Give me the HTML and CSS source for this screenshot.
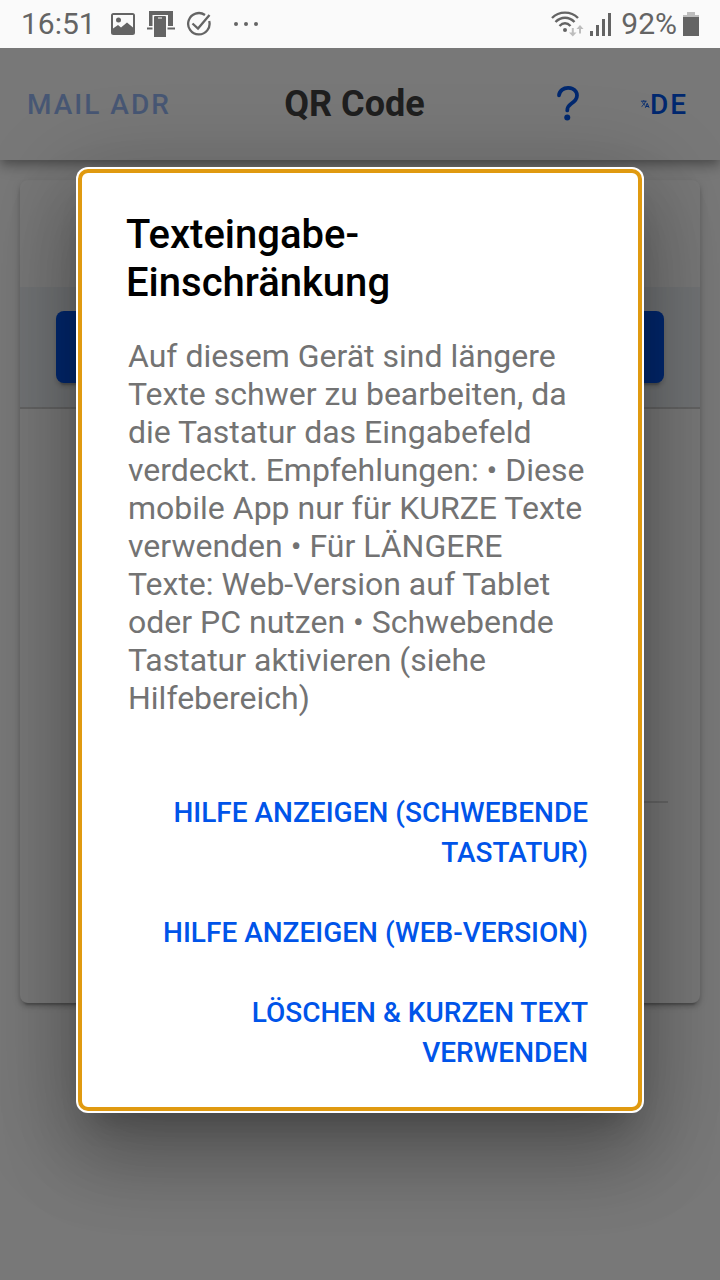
FILE: index.html
```html
<!DOCTYPE html>
<html lang="de">
<head>
<meta charset="utf-8">
<meta name="viewport" content="width=device-width, initial-scale=1">
<title>QR Code</title>
<link rel="stylesheet" href="styles.css">
</head>
<body>
<div class="statusbar">
  <span class="clock">16:51</span>
  <svg class="icon-image" width="24" height="24" viewBox="0 0 24 24" aria-hidden="true">
    <path fill-rule="evenodd" d="M2.500 1h19A2.500 2.500 0 0 1 24 3.500v17a2.500 2.500 0 0 1-2.500 2.500h-19A2.500 2.500 0 0 1 0 20.500v-17A2.500 2.500 0 0 1 2.500 1zM2 3v13.500l5-3.500 3 2.500 6-5 6 5V3z"/>
    <circle cx="7.500" cy="8" r="2.500"/>
  </svg>
  <svg class="icon-device" width="28" height="26" viewBox="0 0 28 26" aria-hidden="true">
    <path d="M2 0h24v15h-5V4H5.500v11H2zM0 16.500h5.500v2H0zM20.500 16.500H28v2h-7.500z"/>
    <path fill-rule="evenodd" d="M8 5h10a1 1 0 0 1 1 1v20H7V6a1 1 0 0 1 1-1zM11 6.500v1h4v-1z"/>
  </svg>
  <svg class="icon-check" width="26" height="26" viewBox="0 0 26 26" aria-hidden="true">
    <path d="M19 4A10.700 10.700 0 1 0 23.200 10M6.500 12.500l5.500 5L23.500 4" fill="none" stroke="currentColor" stroke-width="2.300"/>
  </svg>
  <svg class="icon-more" width="26" height="6" viewBox="0 0 26 6" aria-hidden="true">
    <circle cx="3" cy="3" r="2"/><circle cx="13" cy="3" r="2"/><circle cx="23" cy="3" r="2"/>
  </svg>
  <span class="spacer"></span>
  <svg class="icon-wifi" width="33" height="26" viewBox="0 0 33 26" aria-hidden="true">
    <g fill="none" stroke="currentColor" stroke-width="2.400">
      <path d="M1 7C8-.2 20-.2 27 7M4.500 11C10 5.300 18 5.300 23.500 11M8.500 15C12 11.300 16 11.300 19.500 15"/>
    </g>
    <circle cx="14" cy="19" r="2"/>
    <path class="faint" d="M20.800 17h2v4.500h2.700L21.800 25.500 18 21.500h2.800zM29 14l3.500 4h-2.500v4.500h-2V18h-2.500z"/>
  </svg>
  <svg class="icon-signal" width="24" height="24" viewBox="0 0 24 24" aria-hidden="true">
    <path d="M1 19h3v5H1zM7 13h3v11H7zM13 7h3v17h-3zM19 1h3v23h-3z"/>
  </svg>
  <span class="battery">92%</span>
  <svg class="icon-battery" width="16" height="24" viewBox="0 0 16 24" aria-hidden="true">
    <path class="faint" d="M4 0h8v3h4v3H0V3h4z"/>
    <path d="M0 5h16v19H0z"/>
  </svg>
</div>

<header class="toolbar">
  <button class="toolbar-button" type="button" disabled>MAIL ADR</button>
  <h1 class="toolbar-title">QR Code</h1>
  <div class="toolbar-end">
    <button class="icon-button" type="button" aria-label="Hilfe">
      <svg width="48" height="48" viewBox="0 0 512 512" aria-hidden="true">
        <path d="M160 164s1.440-33 33.540-59.460C212.600 88.830 235.490 84.280 256 84c18.730-.23 35.470 2.940 45.480 7.820C318.590 100.200 352 120.600 352 164c0 45.670-29.180 66.370-62.350 89.180S248 298.360 248 324" fill="none" stroke="currentColor" stroke-linecap="round" stroke-width="40"/>
        <circle cx="248" cy="400" r="32" fill="currentColor"/>
      </svg>
    </button>
    <button class="toolbar-button language" type="button">
      <svg width="10" height="10" viewBox="0 0 512 512" aria-hidden="true">
        <path d="M48 112h288M192 64v48M272 448l96-224 96 224M301.500 384h133M281 112S257 206 199 277 80 384 80 384M256 336s-35-27-75-81-53-95-53-95" fill="none" stroke="currentColor" stroke-width="48"/>
      </svg>DE
    </button>
  </div>
</header>

<main class="content">
  <section class="card">
    <div class="card-head"></div>
    <div class="card-actions"><button class="primary" type="button" aria-label="QR Code"></button></div>
    <div class="card-body"><div class="field"></div></div>
  </section>
</main>

<div class="backdrop">
  <div class="alert" role="alertdialog" aria-modal="true" aria-labelledby="alert-title" aria-describedby="alert-message">
    <h2 class="alert-title" id="alert-title">Texteingabe-Einschränkung</h2>
    <p class="alert-message" id="alert-message">Auf diesem Gerät sind längere Texte schwer zu bearbeiten, da die Tastatur das Eingabefeld verdeckt. Empfehlungen: • Diese mobile App nur für KURZE Texte verwenden • Für LÄNGERE Texte: Web-Version auf Tablet oder PC nutzen • Schwebende Tastatur aktivieren (siehe Hilfebereich)</p>
    <div class="alert-buttons">
      <button class="alert-button" type="button">HILFE ANZEIGEN (SCHWEBENDE TASTATUR)</button>
      <button class="alert-button" type="button">HILFE ANZEIGEN (WEB-VERSION)</button>
      <button class="alert-button" type="button">LÖSCHEN &amp; KURZEN TEXT VERWENDEN</button>
    </div>
  </div>
</div>
</body>
</html>
```
FILE: styles.css
```css
* {
  box-sizing: border-box;
}

body {
  margin: 0;
  min-height: 100vh;
  display: flex;
  flex-direction: column;
  background: #fafafa;
  font-family: Roboto, "Liberation Sans", sans-serif;
}

button {
  border: 0;
  background: none;
  font: inherit;
  text-align: inherit;
}

svg {
  display: block;
  flex: none;
}

.statusbar {
  position: relative;
  z-index: 3;
  display: flex;
  align-items: center;
  height: 48px;
  padding: 0 21px;
  background: #fafafa;
  color: #646464;
  fill: currentColor;
  font-size: 30px;
  line-height: 48px;
}

.clock {
  margin-right: 15px;
}

.icon-image {
  margin-right: 12px;
}

.icon-device {
  margin-right: 11px;
}

.icon-more {
  margin-left: 21px;
}

.spacer {
  flex: 1;
}

.icon-signal {
  margin: 0 8px 0 5px;
}

.icon-battery {
  margin-left: 6px;
}

.faint {
  fill: #bdbdbd;
}

.toolbar {
  position: relative;
  z-index: 1;
  display: grid;
  grid-template-columns: 1fr auto 1fr;
  align-items: center;
  height: 112px;
  padding: 0 32px 0 27px;
  background: #fafafa;
  box-shadow: 0 4px 8px -2px rgba(0, 0, 0, 0.2), 0 8px 10px rgba(0, 0, 0, 0.14), 0 2px 20px rgba(0, 0, 0, 0.12);
}

.toolbar-button {
  justify-self: start;
  padding: 0;
  color: #0054e9;
  font-size: 28px;
  font-weight: 500;
  letter-spacing: 2px;
}

.toolbar-button:disabled {
  opacity: 0.4;
}

.toolbar-title {
  margin: 0 6px 0 0;
  color: #424242;
  font-size: 36px;
  font-weight: 700;
}

.toolbar-end {
  display: flex;
  align-items: center;
  justify-content: flex-end;
  gap: 48px;
}

.icon-button {
  padding: 0;
  color: #0054e9;
}

.language {
  display: flex;
  align-items: center;
}

.content {
  flex: 1;
  padding: 20px;
}

.card {
  overflow: hidden;
  border-radius: 8px;
  background: #fafafa;
  box-shadow: 0 6px 2px -4px rgba(0, 0, 0, 0.2), 0 4px 4px rgba(0, 0, 0, 0.14), 0 2px 10px rgba(0, 0, 0, 0.12);
}

.card-head {
  height: 107px;
}

.card-actions {
  padding: 24px 36px;
  border-bottom: 2px solid #d0d0d0;
  background: #edf1f4;
}

.primary {
  display: block;
  width: 100%;
  height: 72px;
  border-radius: 8px;
  background: #0054e9;
  box-shadow: 0 6px 2px -4px rgba(0, 0, 0, 0.2), 0 4px 4px rgba(0, 0, 0, 0.14);
}

.card-body {
  height: 594px;
  padding: 0 32px 0 64px;
}

.field {
  height: 394px;
  border-bottom: 2px solid #d8d8d8;
}

.backdrop {
  position: absolute;
  inset: 0;
  z-index: 2;
  display: flex;
  align-items: center;
  justify-content: center;
  background: rgba(0, 0, 0, 0.52);
}

.alert {
  width: 560px;
  max-width: 90%;
  border-radius: 8px;
  outline: 4px solid #e09a10;
  outline-offset: -2px;
  background: #fff;
  box-shadow: 0 0 0 4px #fff, 0 22px 30px -14px rgba(0, 0, 0, 0.22), 0 48px 76px 6px rgba(0, 0, 0, 0.18), 0 18px 92px 16px rgba(0, 0, 0, 0.2);
}

.alert-title {
  margin: 0;
  padding: 40px 46px 30px;
  color: #000;
  font-size: 40px;
  font-weight: 500;
  line-height: 48px;
}

.alert-message {
  margin: 0;
  padding: 0 48px 40px;
  color: #737373;
  font-size: 32px;
  line-height: 38px;
}

.alert-buttons {
  display: flex;
  flex-direction: column;
  align-items: flex-end;
  padding: 16px;
}

.alert-button {
  margin-right: 16px;
  padding: 20px;
  color: #0054e9;
  font-size: 28px;
  font-weight: 500;
  line-height: 40px;
  text-align: right;
}
```
